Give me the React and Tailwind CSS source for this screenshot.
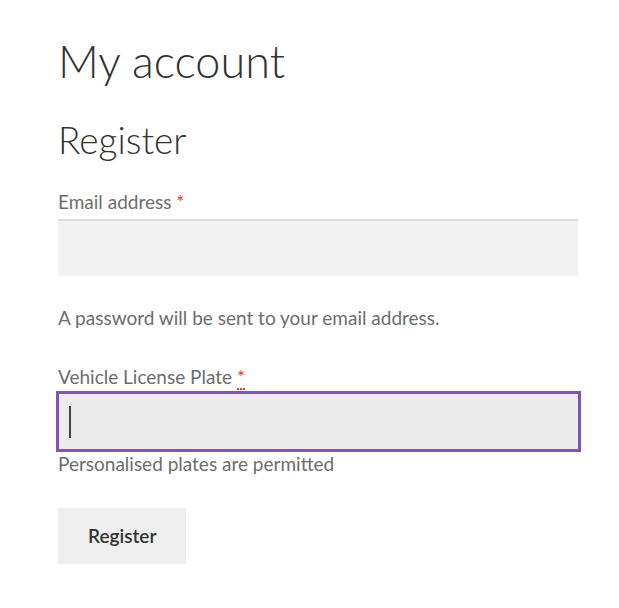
export default function App() {
  return (
    <div className="min-h-screen bg-white font-['Lato','Liberation_Sans',sans-serif] text-[#6d6d6d]">
      <div className="pl-[58px] pt-[30px]">
        {/* Page title */}
        <h1 className="text-[45px] leading-[62px] font-light text-[#333]">My account</h1>
        <h2 className="mt-[24px] text-[37px] leading-[48px] font-light text-[#333]">Register</h2>

        <form className="mt-[25px]" onSubmit={(e) => e.preventDefault()}>
          {/* Email */}
          <label className="block text-[19px] leading-[26px]">
            Email address <span className="text-[#e2401c]">*</span>
          </label>
          <input
            type="email"
            className="mt-[4px] block w-[520px] h-[57px] bg-[#f2f2f2] border-t-2 border-[#dcdcdc] outline-none px-3"
          />

          <p className="mt-[29px] text-[19px] leading-[26px]">A password will be sent to your email address.</p>

          {/* Plate */}
          <label className="block mt-[33px] text-[19px] leading-[26px]">
            Vehicle License Plate{" "}
            <abbr className="text-[#e2401c] no-underline border-b-2 border-dotted border-[#e2401c]" title="required">
              *
            </abbr>
          </label>
          <div className="mt-[1px] w-[525px] h-[61px] -ml-[2px] border-[3px] border-[#7f54b3] bg-[#ececec] flex items-center px-[10px]">
            <div className="w-[2px] h-[32px] bg-[#444]" />
          </div>
          <p className="-mt-[1px] text-[19px] leading-[26px]">Personalised plates are permitted</p>

          <button
            type="submit"
            className="mt-[31px] h-[56px] px-[30px] bg-[#eeeeee] text-[#333] text-[19px] font-semibold"
          >
            Register
          </button>
        </form>
      </div>
    </div>
  );
}
